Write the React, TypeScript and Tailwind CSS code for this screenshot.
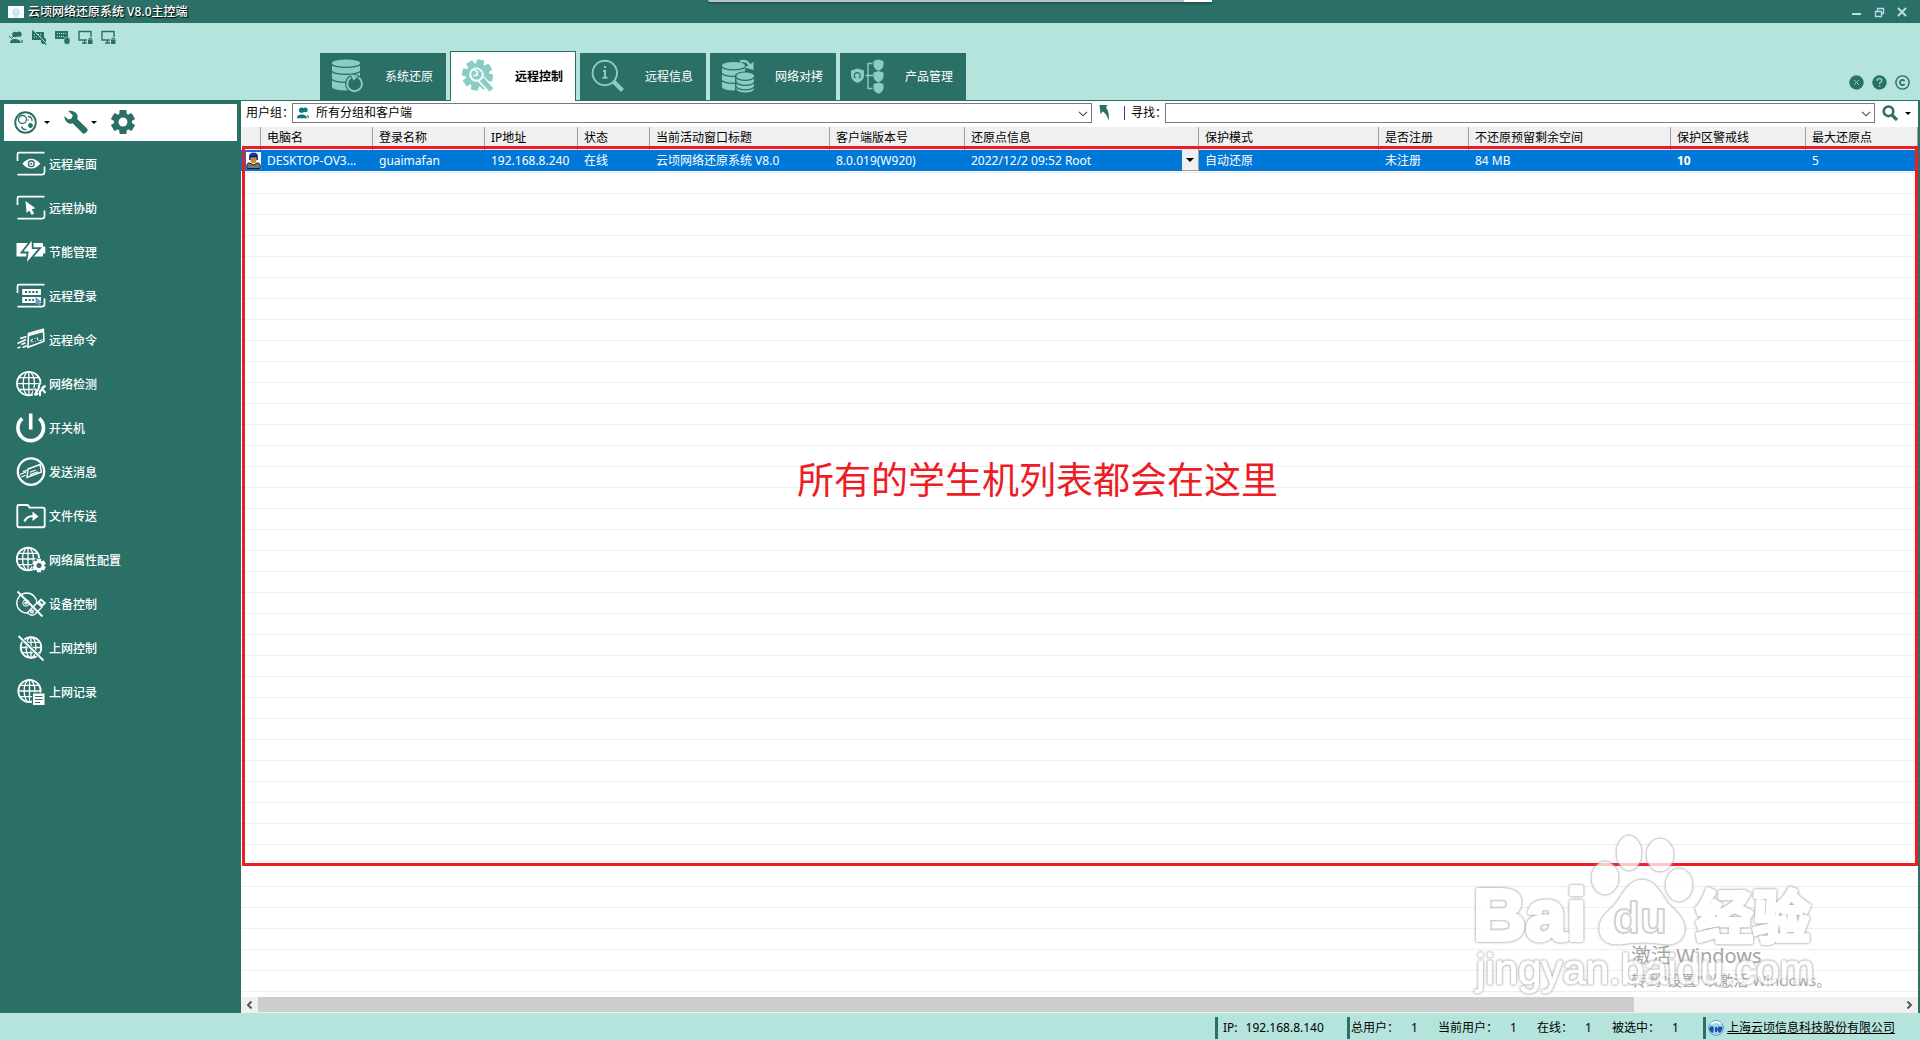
import React from "react";
import type { ReactNode } from "react";

const DARK = "#2a7067";
const MINT = "#89cdc5";

function Globe({ cx, cy, r }: { cx: number; cy: number; r: number }) {
  return (
    <g fill="none" stroke="#fff" strokeWidth="1.3">
      <circle cx={cx} cy={cy} r={r} strokeWidth="1.8" />
      <ellipse cx={cx} cy={cy} rx={r * 0.48} ry={r} />
      <path d={`M${cx} ${cy - r}v${2 * r}M${cx - r} ${cy}h${2 * r}`} />
      <path
        d={`M${cx - r * 0.86} ${cy - r * 0.5}h${r * 1.72}M${cx - r * 0.86} ${cy + r * 0.5}h${r * 1.72}`}
      />
    </g>
  );
}

function Gear({
  cx,
  cy,
  r,
  fill,
  hole,
  angles = [0, 60, 120],
}: {
  cx: number;
  cy: number;
  r: number;
  fill: string;
  hole: string;
  angles?: number[];
}) {
  const tooth = angles.length > 3 ? 0.24 : 0.3;
  return (
    <g fill={fill}>
      {angles.map((angle) => (
        <rect
          key={angle}
          x={cx - r * tooth}
          y={cy - r}
          width={r * tooth * 2}
          height={r * 2}
          rx={r * 0.08}
          transform={`rotate(${angle} ${cx} ${cy})`}
        />
      ))}
      <circle cx={cx} cy={cy} r={r * 0.76} />
      <circle cx={cx} cy={cy} r={r * 0.37} fill={hole} />
    </g>
  );
}

function Frame() {
  return (
    <path
      d="M1.5 12V5q0-1.3 1.5-1.3H28.5M28.5 17.5V23q0 2.7-2.7 2.7H1.5"
      fill="none"
      stroke="#fff"
      strokeWidth="1.7"
    />
  );
}

const menu: { label: string; icon: ReactNode }[] = [
  {
    label: "远程桌面",
    icon: (
      <>
        <Frame />
        <path d="M6.3 14.7Q15.3 5 24.3 14.7Q15.3 24.4 6.3 14.7Z" fill="#fff" />
        <circle cx="15.3" cy="14.7" r="3.6" fill={DARK} />
        <circle cx="15.3" cy="14.7" r="2.2" fill="#fff" />
        <circle cx="15.3" cy="14.7" r="1" fill={DARK} />
      </>
    ),
  },
  {
    label: "远程协助",
    icon: (
      <>
        <Frame />
        <path
          d="M9.5 8L10.6 20 13.2 17.6 15.8 21.9 18.2 20.4 15.6 16.3 19.4 15.2Z"
          fill="#fff"
        />
      </>
    ),
  },
  {
    label: "节能管理",
    icon: (
      <>
        <path d="M.5 6H27v3.5h2.3v7H27v3H.5Z" fill="#fff" />
        <path
          d="M16.5 1.5L5.5 15.5h6.2L9.5 28 24 11.2h-7.3Z"
          fill="#fff"
          stroke={DARK}
          strokeWidth="1.8"
        />
      </>
    ),
  },
  {
    label: "远程登录",
    icon: (
      <>
        <Frame />
        <path d="M6.2 8H25v6H6.2ZM6.2 16H25v6H6.2Z" fill="#fff" />
        <path
          d="M9 11h13M9 19h9"
          stroke={DARK}
          strokeWidth="1.8"
          strokeDasharray="2 1.6"
        />
        <path d="M19.5 16v8l2-1.7 1.7 3 1.7-1-1.6-2.9 2.5-.6Z" fill="#6f9cc8" />
      </>
    ),
  },
  {
    label: "远程命令",
    icon: (
      <g fill="none" stroke="#fff" strokeWidth="1.6">
        <path d="M12.5 8.4L27.3 4.2 28 16.2 12 22.3Z" />
        <path d="M12.5 10.2L27.5 6" strokeWidth="2" />
        <path
          d="M17 14q-2.5.5-2 2.3.4 1.2 2 .4M19 13.2v.8M19.2 16v.8M21 12.2l1.3 3.6M23.5 15.7l3-1"
          strokeWidth="1"
        />
        <path d="M4 13.6L10.5 11.4M1.5 18.5L10 14.6M5.5 19.4l4-1.6M1.5 23l3-1M6.5 22.5L11 20.8" />
      </g>
    ),
  },
  {
    label: "网络检测",
    icon: (
      <>
        <Globe cx={12.8} cy={14.6} r={11.8} />
        <path d="M16.5 30L17.5 20l6.5-7 6 2v15Z" fill={DARK} />
        <path
          d="M19 26.5q.5-4 3.5-6M22.5 20.5q0-4 2-7M24 27v-4.5l5.5-6M18.5 20l2 1M25.5 19.5l3-2.5M22.5 24l-2.5 2M27 21l2.5 3"
          fill="none"
          stroke="#fff"
          strokeWidth="2"
        />
      </>
    ),
  },
  {
    label: "开关机",
    icon: (
      <g fill="none" stroke="#fff" strokeWidth="3.6">
        <path d="M6.2 5.3A12.8 12.8 0 1 0 23.2 5.3" />
        <path d="M14.7 .5V16.5" />
      </g>
    ),
  },
  {
    label: "发送消息",
    icon: (
      <g fill="none" stroke="#fff">
        <circle cx="15" cy="14.6" r="13.2" strokeWidth="2.3" />
        <path d="M12 12L24 7.5 25.5 15 11 20.5Z" strokeWidth="1.4" />
        <path
          d="M14 15.2l6-2.2M14 17.6l8-2.9M4 17.5l6-2.5M5.5 20l4-1.7M7 14.6l4-1.4"
          strokeWidth="1.2"
        />
      </g>
    ),
  },
  {
    label: "文件传送",
    icon: (
      <>
        <path
          d="M1.3 5.5q0-1.5 1.5-1.5H11q1 0 1.6 1l1 1.6H27q1.7 0 1.7 1.7V24.5q0 1.7-1.7 1.7H3q-1.7 0-1.7-1.7Z"
          fill="none"
          stroke="#fff"
          strokeWidth="1.9"
        />
        <path
          d="M8.5 20.5q2-5.5 9-5.5"
          fill="none"
          stroke="#fff"
          strokeWidth="2.2"
        />
        <path d="M16.5 10.5L22.5 15.5 16.5 20Z" fill="#fff" />
      </>
    ),
  },
  {
    label: "网络属性配置",
    icon: (
      <>
        <Globe cx={12} cy={14} r={11.3} />
        <circle cx="23" cy="20.5" r="7.4" fill={DARK} />
        <Gear cx={23} cy={20.5} r={6.8} fill="#fff" hole={DARK} />
      </>
    ),
  },
  {
    label: "设备控制",
    icon: (
      <g fill="none" stroke="#fff" strokeWidth="1.4">
        <circle cx="10.8" cy="14" r="10" />
        <circle cx="10" cy="14" r="3.2" strokeWidth="1" />
        <circle cx="10" cy="14" r="1" />
        <path d="M13 22l8-8 5 4-7 7q-3 2.5-6 0-2-1.5 0-3Z" fill={DARK} />
        <path d="M22.5 13l2.5-2.5 4 3.5-2.5 2.5Z" strokeWidth="1.8" />
        <circle cx="16" cy="22.5" r="1.3" />
        <path d="M1.5 2.5L26.5 27.5" strokeWidth="1.9" />
      </g>
    ),
  },
  {
    label: "上网控制",
    icon: (
      <>
        <Globe cx={15} cy={14.5} r={10.3} />
        <path d="M2.5 3L27.5 27.5" stroke={DARK} strokeWidth="3.4" />
        <path d="M2.5 3L27.5 27.5" stroke="#fff" strokeWidth="1.9" />
      </>
    ),
  },
  {
    label: "上网记录",
    icon: (
      <>
        <Globe cx={13.5} cy={14} r={11.2} />
        <path d="M16.5 16H29v12.5H16.5Z" fill="#fff" stroke={DARK} />
        <path
          d="M19 19.5h7.5M19 22.5h7.5M19 25.5h5"
          stroke={DARK}
          strokeWidth="1.2"
        />
      </>
    ),
  },
];

function Cylinder({
  x,
  y,
  w,
  h,
  bands,
}: {
  x: number;
  y: number;
  w: number;
  h: number;
  bands: number[];
}) {
  const r = w / 2;
  return (
    <g>
      <path
        d={`M${x} ${y}a${r} 3.4 0 0 1 ${w} 0v${h}a${r} 3.4 0 0 1 ${-w} 0Z`}
        fill={MINT}
      />
      {bands.map((b) => (
        <path
          key={b}
          d={`M${x} ${y + b}a${r} 3.4 0 0 0 ${w} 0`}
          fill="none"
          stroke={DARK}
          strokeWidth="1.3"
        />
      ))}
    </g>
  );
}

function Shield({ x, y, s }: { x: number; y: number; s: number }) {
  return (
    <path
      d={`M${x} ${y}l${s * 0.5} ${s * 0.16}v${s * 0.36}q0 ${s * 0.4} ${-s * 0.5} ${s * 0.6}q${-s * 0.5} ${-s * 0.2} ${-s * 0.5} ${-s * 0.6}v${-s * 0.36}Z`}
      fill={MINT}
    />
  );
}

const tabs: { label: string; active?: boolean; icon: ReactNode }[] = [
  {
    label: "系统还原",
    icon: (
      <>
        <Cylinder x={1} y={4} w={28} h={24} bands={[1, 8, 16]} />
        <circle cx="23.5" cy="24.7" r="9.5" fill={DARK} />
        <path
          d="M20 18.3A7.4 7.4 0 1 0 27.5 18.5"
          fill="none"
          stroke={MINT}
          strokeWidth="2"
        />
        <path d="M19.5 15.5l8 1.5-5 4.5Z" fill={MINT} />
      </>
    ),
  },
  {
    label: "远程控制",
    active: true,
    icon: (
      <>
        <Gear
          cx={16.5}
          cy={16}
          r={15.5}
          fill={MINT}
          hole={MINT}
          angles={[12, 57, 102, 147]}
        />
        <path d="M20 20L31.5 32" stroke="#fff" strokeWidth="8" />
        <path d="M19 18.5L30.5 31" stroke={MINT} strokeWidth="5" />
        <path
          d="M12.8 9.8A6.3 6.3 0 1 0 21.5 13.5"
          fill="none"
          stroke="#fff"
          strokeWidth="2"
        />
        <path
          d="M12.8 9.8q5-2 8.7 3.7M13 10.5l3.5 2.3-.5 3.2-3.5.8"
          fill="none"
          stroke="#fff"
          strokeWidth="1.6"
        />
      </>
    ),
  },
  {
    label: "远程信息",
    icon: (
      <>
        <circle
          cx="13.8"
          cy="14"
          r="12.2"
          fill="none"
          stroke={MINT}
          strokeWidth="1.9"
        />
        <path d="M22.5 22.5L31.5 31.5" stroke={MINT} strokeWidth="4.3" />
        <path
          d="M12 12h2v6.5M11.5 18.7h5M13 8h2"
          fill="none"
          stroke={MINT}
          strokeWidth="1.9"
        />
      </>
    ),
  },
  {
    label: "网络对拷",
    icon: (
      <>
        <Cylinder x={1} y={6.5} w={23} h={21.5} bands={[1, 7.5, 14.5]} />
        <path d="M14 16.5a10 4 0 0 1 20 0V35H14Z" fill={DARK} />
        <Cylinder x={15.5} y={17} w={17.5} h={13} bands={[1, 6, 10.5]} />
        <path d="M19 2.5q7-2 9.5 4" fill="none" stroke={MINT} strokeWidth="2.5" />
        <path d="M23.5 8.5l9-5.5V11Z" fill={MINT} />
      </>
    ),
  },
  {
    label: "产品管理",
    icon: (
      <>
        <Shield x={6.5} y={9.5} s={13} />
        <path
          d="M4.5 19a3 3 0 1 1 3.5 0"
          fill="none"
          stroke={DARK}
          strokeWidth="1.2"
        />
        <path
          d="M14.5 16.5h8M21.5 4.5h-4.5v25h4.5"
          fill="none"
          stroke={MINT}
          strokeWidth="1.4"
        />
        <Shield x={27.5} y={0.5} s={10} />
        <Shield x={27.5} y={12} s={10} />
        <Shield x={27.5} y={23.5} s={10} />
      </>
    ),
  },
];

const People = (
  <>
    <circle cx="6" cy="4.5" r="2.8" />
    <circle cx="10" cy="4.2" r="2.6" />
    <path d="M1 13q0-4 5-4t6 4ZM12 9.5q2 .5 2 3h-1.5Z" />
  </>
);

const LockedScreen = (
  <>
    <path
      d="M9 10H1V1.5h12V7M4 13h5M6.5 10v3"
      fill="none"
      stroke={DARK}
      strokeWidth="1.4"
    />
    <path d="M10 9.5h4.5V14H10Z" />
    <path d="M11 9.5V8.3h2.5v1.2" fill="none" stroke={DARK} />
  </>
);

const quickTools: { label: string; icon: ReactNode }[] = [
  {
    label: "分组",
    icon: (
      <>
        {People}
        <path d="M0 6l2.5 2.5L6 4" fill="none" stroke={DARK} />
      </>
    ),
  },
  {
    label: "解锁键鼠",
    icon: (
      <>
        <path d="M0 2h12v8H0Z" />
        <path
          d="M2 4.5h8M2 7h8"
          stroke="#b5e4dc"
          strokeDasharray="1 1"
        />
        <rect x="9" y="7.5" width="5" height="6.5" rx="2.5" />
        <path d="M1 0L15 14" stroke="#b5e4dc" strokeWidth="1" />
        <path d="M0 .5L14 14.5" stroke={DARK} strokeWidth="1.4" />
      </>
    ),
  },
  {
    label: "锁定键鼠",
    icon: (
      <>
        <path d="M0 1h13v8H0Z" />
        <path
          d="M2 3.5h9M2 6.5h7"
          stroke="#b5e4dc"
          strokeWidth="1.2"
          strokeDasharray="1 1"
        />
        <rect
          x="9"
          y="7"
          width="6"
          height="7.5"
          rx="3"
          stroke="#b5e4dc"
          strokeWidth=".6"
        />
      </>
    ),
  },
  { label: "锁定屏幕", icon: LockedScreen },
  { label: "解锁屏幕", icon: LockedScreen },
];

function TitleBar() {
  return (
    <div className="relative flex h-[23px] items-center justify-between bg-[#2a7067] pl-2">
      <div className="absolute top-0 left-1/2 flex h-[2px] w-[504px] -translate-x-1/2 justify-end rounded-b-sm bg-[#b9c4c2] shadow-[0_1px_3px_#123c37]">
        <span className="w-7 bg-white" />
      </div>
      <div className="flex items-center gap-1">
        <svg width="16" height="12" viewBox="0 0 16 12" aria-hidden="true">
          <rect width="16" height="12" fill="#f7fbfd" />
          <path
            d="M5 6q0-3 3-3t3 3ZM4 8h8M6 10h4"
            fill="none"
            stroke="#a5cfe0"
          />
        </svg>
        <h1 className="text-xs leading-4 font-medium text-white [text-shadow:1px_1px_1px_#000]">
          云顷网络还原系统 V8.0主控端
        </h1>
      </div>
      <div className="flex gap-3 pr-[13px] text-[#b9dcef]">
        <button aria-label="最小化">
          <svg width="11" height="12" viewBox="0 0 11 12">
            <path d="M1 8h9" stroke="currentColor" strokeWidth="2" />
          </svg>
        </button>
        <button aria-label="还原窗口">
          <svg width="11" height="12" viewBox="0 0 11 12">
            <path
              d="M1.5 5.5h6v5h-6ZM3.5 5V2.5h6v5H8M3 2.5h7M1 5.5h7"
              fill="none"
              stroke="currentColor"
              strokeWidth="1.3"
            />
          </svg>
        </button>
        <button aria-label="关闭">
          <svg width="10" height="12" viewBox="0 0 10 12">
            <path
              d="M1 2l8 8M9 2l-8 8"
              stroke="currentColor"
              strokeWidth="2"
            />
          </svg>
        </button>
      </div>
    </div>
  );
}

function Header() {
  return (
    <header className="bg-[#b5e4dc]">
      <TitleBar />
      <div className="flex h-7 items-center gap-2 pl-[9px]">
        {quickTools.map((tool) => (
          <button key={tool.label} aria-label={tool.label}>
            <svg width="15" height="15" viewBox="0 0 15 15" fill={DARK}>
              {tool.icon}
            </svg>
          </button>
        ))}
      </div>
      <div className="flex justify-between border-b border-[#2a7067] pr-[10px] pl-80">
        <nav role="tablist" className="flex h-[49px] items-end gap-1">
          {tabs.map((tab) => (
            <button
              key={tab.label}
              role="tab"
              aria-selected={!!tab.active}
              className={
                tab.active
                  ? "-mb-px flex h-[50px] w-[126px] items-center border border-b-0 border-[#2a7067] bg-white pl-[10px] text-xs font-bold text-black"
                  : "flex h-[47px] w-[126px] items-center bg-[#2a7067] pl-[11px] text-xs text-white"
              }
            >
              <svg width="36" height="36" viewBox="0 0 36 36">
                {tab.icon}
              </svg>
              <span className="ml-[18px]">{tab.label}</span>
            </button>
          ))}
        </nav>
        <div className="flex items-end gap-2 pb-[10px]">
          <button aria-label="退出">
            <svg width="15" height="15" viewBox="0 0 15 15">
              <circle cx="7.5" cy="7.5" r="7.2" fill={DARK} />
              <path d="M5 5l5 5M10 5l-5 5" stroke={MINT} />
            </svg>
          </button>
          <button aria-label="帮助">
            <svg width="15" height="15" viewBox="0 0 15 15">
              <circle cx="7.5" cy="7.5" r="7.2" fill={DARK} />
              <path
                d="M5.2 6q0-2.5 2.3-2.5T9.8 5.7q0 1.2-2.2 2.5v1M7.6 10.5v1.5"
                fill="none"
                stroke={MINT}
                strokeWidth="1.5"
              />
            </svg>
          </button>
          <button aria-label="版权">
            <svg
              width="15"
              height="15"
              viewBox="0 0 15 15"
              fill="none"
              stroke={DARK}
            >
              <circle cx="7.5" cy="7.5" r="6.6" strokeWidth="1.4" />
              <path d="M9.6 6A2.6 2.6 0 1 0 9.6 9" strokeWidth="1.7" />
            </svg>
          </button>
        </div>
      </div>
    </header>
  );
}

function Caret() {
  return (
    <svg width="6" height="3" viewBox="0 0 6 3" aria-hidden="true">
      <path d="M0 0h6L3 3Z" fill="#000" />
    </svg>
  );
}

function Sidebar() {
  return (
    <aside className="w-[241px] flex-none bg-[#2a7067] px-1 pt-[3px]">
      <div className="flex h-[37px] items-center bg-white pb-px pl-[10px]">
        <button aria-label="视图" className="flex w-[50px] items-center gap-[7px]">
          <svg width="23" height="23" viewBox="0 0 23 23" fill="none" stroke={DARK}>
            <circle cx="11.5" cy="11.5" r="10.3" strokeWidth="1.9" />
            <circle cx="8.5" cy="8.5" r="4" strokeWidth="1.3" />
            <circle cx="16.5" cy="14.5" r="2" fill={DARK} />
            <path
              d="M14 5.5q4.5.5 4 4.5M7.5 15.5q1 3.5 5 3M14 8.5l.5 1"
              strokeWidth="1.3"
            />
          </svg>
          <Caret />
        </button>
        <button aria-label="工具" className="flex w-[47px] items-center gap-px">
          <svg width="26" height="24" viewBox="0 0 26 24">
            <path
              d="M4 .8l4.8 4.5-1.3 3.2-3.2 1L.3 6q.2 5 3.7 7 2.5 1.3 4.7.3l9.6 9.7q1.7 1.3 3.3 0l1.4-1.4q1.4-1.6 0-3.2L13.2 9q1-2.3-.2-4.8Q10.5 0 4 .8Z"
              fill={DARK}
            />
          </svg>
          <Caret />
        </button>
        <button aria-label="设置">
          <svg width="24" height="24" viewBox="0 0 24 24">
            <Gear cx={12} cy={12} r={12} fill={DARK} hole="#fff" />
          </svg>
        </button>
      </div>
      <nav className="mt-px flex flex-col">
        {menu.map((item) => (
          <button
            key={item.label}
            className="flex h-11 items-center gap-[3px] pl-3 text-xs font-medium text-white"
          >
            <svg width="30" height="30" viewBox="0 0 30 30">
              {item.icon}
            </svg>
            <span className="pt-px">{item.label}</span>
          </button>
        ))}
      </nav>
    </aside>
  );
}

function Chevron() {
  return (
    <svg
      width="10"
      height="6"
      viewBox="0 0 10 6"
      className="pointer-events-none absolute top-2 right-1"
      aria-hidden="true"
    >
      <path d="M1 .8l4 4 4-4" fill="none" stroke="#444" strokeWidth="1.1" />
    </svg>
  );
}

function FilterBar() {
  return (
    <div className="flex h-[26px] items-center bg-white pb-[2px] pl-[5px] text-xs text-black">
      <label htmlFor="group" className="w-[46px] flex-none whitespace-nowrap">
        用户组：
      </label>
      <div className="relative h-5 min-w-0 flex-[800]">
        <svg
          width="14"
          height="14"
          viewBox="0 0 15 15"
          fill="#0b7a78"
          className="pointer-events-none absolute top-[3px] left-1"
        >
          {People}
        </svg>
        <select
          id="group"
          className="block h-5 w-full appearance-none border border-[#7a7a7a] bg-white pl-[23px] text-xs leading-4"
        >
          <option>所有分组和客户端</option>
        </select>
        <Chevron />
      </div>
      <div className="flex w-[73px] flex-none items-center pl-[7px]">
        <button aria-label="返回上级" className="flex-none">
          <svg width="12" height="18" viewBox="0 0 12 18">
            <path
              d="M.5 1h8L7 3.5q4 5 2.5 13.5-1-6-5.5-9.5L1.5 10Z"
              fill={DARK}
            />
          </svg>
        </button>
        <span className="mr-[6px] ml-[13px] h-[14px] w-px flex-none bg-[#3a3f9c]" />
        <label htmlFor="search" className="whitespace-nowrap">
          寻找：
        </label>
      </div>
      <div className="relative h-5 min-w-0 flex-[710]">
        <input
          id="search"
          className="block h-5 w-full border border-[#7a7a7a] bg-white px-1 text-xs"
        />
        <Chevron />
      </div>
      <button
        aria-label="搜索"
        className="flex w-[43px] flex-none items-center gap-[7px] pl-[7px]"
      >
        <svg width="16" height="16" viewBox="0 0 16 16" fill="none" stroke={DARK}>
          <circle cx="6.5" cy="6.3" r="4.8" strokeWidth="2.6" />
          <path d="M10 10l5 5" strokeWidth="3.2" />
        </svg>
        <Caret />
      </button>
    </div>
  );
}

const columns = [
  { title: "电脑名", value: "DESKTOP-OV3...", width: "w-[112px]" },
  { title: "登录名称", value: "guaimafan", width: "w-[112px]" },
  { title: "IP地址", value: "192.168.8.240", width: "w-[93px]" },
  { title: "状态", value: "在线", width: "w-[72px]" },
  { title: "当前活动窗口标题", value: "云顷网络还原系统 V8.0", width: "w-[180px]" },
  { title: "客户端版本号", value: "8.0.019(W920)", width: "w-[135px]" },
  {
    title: "还原点信息",
    value: "2022/12/2 09:52 Root",
    width: "w-[234px]",
    dropdown: true,
  },
  { title: "保护模式", value: "自动还原", width: "w-[180px]" },
  { title: "是否注册", value: "未注册", width: "w-[90px]" },
  { title: "不还原预留剩余空间", value: "84 MB", width: "w-[202px]" },
  { title: "保护区警戒线", value: "10", width: "w-[135px]", bold: true },
  { title: "最大还原点", value: "5", width: "w-auto" },
];

function ClientTable() {
  return (
    <table className="w-full table-fixed border-separate border-spacing-0 text-left text-xs whitespace-nowrap">
      <thead>
        <tr className="h-[23px] bg-[#f0f0f0] text-black">
          <th className="w-5 border-r border-[#a0a0a0] p-0" aria-label="图标" />
          {columns.map((col) => (
            <th
              key={col.title}
              className={`${col.width} border-r border-[#a0a0a0] p-0 pb-[2px] pl-[6px] leading-4 font-normal`}
            >
              {col.title}
            </th>
          ))}
        </tr>
      </thead>
      <tbody>
        <tr className="h-[21px] bg-[#0078d7] text-white">
          <td className="p-0">
            <svg
              width="15"
              height="17"
              viewBox="0 0 15 17"
              className="ml-auto block bg-white"
            >
              <path d="M3 5q0-4.5 4.5-4.5T12 5v3H3Z" fill="#1d32b8" />
              <path d="M4.5 5h6v4q-1 2.5-3 2.5T4.5 9Z" fill="#c98b2b" />
              <path d="M4 4.5h7" stroke="#0a1560" strokeWidth="1.5" />
              <path
                d="M.8 16.5v-3q0-2 2.5-2.7L7.5 13l4.2-2.2q2.5.7 2.5 2.7v3Z"
                fill="#777"
                stroke="#1a1a1a"
              />
            </svg>
          </td>
          {columns.map((col) => (
            <td key={col.title} className="p-0 pl-[6px] leading-4">
              <div className="flex h-[21px] items-center justify-between">
                <span className={col.bold ? "font-bold" : ""}>{col.value}</span>
                {col.dropdown ? (
                  <button
                    aria-label="选择还原点"
                    className="flex h-[21px] w-[17px] items-center justify-center border-r border-b border-[#a0a0a0] bg-[#f0f0f0]"
                  >
                    <svg width="8" height="4" viewBox="0 0 8 4">
                      <path d="M0 0h8L4 4Z" fill="#000" />
                    </svg>
                  </button>
                ) : null}
              </div>
            </td>
          ))}
        </tr>
      </tbody>
    </table>
  );
}

function Watermark() {
  return (
    <svg
      width="370"
      height="180"
      viewBox="0 0 370 180"
      className="pointer-events-none absolute right-[78px] bottom-0"
    >
      <g
        fill="#a4a4a4"
        fontFamily="'Noto Sans', 'Noto Sans CJK SC', sans-serif"
      >
        <text x="161" y="146" fontSize="20">
          激活 Windows
        </text>
        <text x="161" y="169" fontSize="15">
          转到"设置"以激活 Windows。
        </text>
      </g>
      <g
        opacity=".75"
        fill="#fff"
        stroke="#fff"
        strokeLinejoin="round"
        fontFamily="'Liberation Sans', 'Noto Sans CJK SC', sans-serif"
        className="[filter:drop-shadow(0_0_1px_#888)_drop-shadow(0_0_1px_#bbb)]"
      >
        <ellipse cx="135" cy="61" rx="13" ry="16" />
        <ellipse cx="159" cy="36" rx="12" ry="17" />
        <ellipse cx="190" cy="38" rx="13" ry="16" />
        <ellipse cx="209" cy="68" rx="13" ry="16" />
        <path d="M172 63q11 0 20 15 5 9 12 15 12 11 10 22-3 13-18 12-24-4-46 0-18 1-20-12-2-12 10-22 7-6 12-15 9-15 20-15Z" />
        <g strokeWidth="4">
          <text x="3" y="123" fontSize="73" fontWeight="bold">
            Bai
          </text>
          <text x="226" y="121" fontSize="57" fontWeight="bold">
            经验
          </text>
        </g>
        <text
          x="143"
          y="116"
          fontSize="44"
          fontWeight="bold"
          stroke="#c4c4c4"
          strokeWidth="2"
        >
          du
        </text>
        <text x="6" y="167" fontSize="42" strokeWidth="1">
          jingyan.baidu.com
        </text>
      </g>
    </svg>
  );
}

function ScrollBar() {
  return (
    <div className="flex h-4 bg-[#f0f0f0] pb-px">
      <button aria-label="向左滚动" className="flex w-[17px] items-center justify-center">
        <svg width="7" height="8" viewBox="0 0 7 8">
          <path d="M5.5 .5L2 4l3.5 3.5" fill="none" stroke="#555" strokeWidth="2" />
        </svg>
      </button>
      <div className="flex-[1376] bg-[#cdcdcd]" />
      <div className="flex-[267]" />
      <button aria-label="向右滚动" className="flex w-[17px] items-center justify-center">
        <svg width="7" height="8" viewBox="0 0 7 8">
          <path d="M1.5 .5L5 4 1.5 7.5" fill="none" stroke="#555" strokeWidth="2" />
        </svg>
      </button>
    </div>
  );
}

const counts = [
  { label: "总用户：", value: 1, width: "w-[87px]" },
  { label: "当前用户：", value: 1, width: "w-[99px]" },
  { label: "在线：", value: 1, width: "w-[75px]" },
  { label: "被选中：", value: 1, width: "w-[91px]" },
];

function StatusBar() {
  return (
    <footer className="flex h-[27px] items-start justify-end bg-[#b5e4dc] pt-1 text-xs text-black">
      <div className="flex h-[22px] w-[132px] items-center gap-2 border-l-3 border-[#2a7067] pl-[5px]">
        <span>IP:</span>
        <span>192.168.8.140</span>
      </div>
      <div className="flex h-[22px] items-center border-l-3 border-[#2a7067] pl-px">
        {counts.map((item) => (
          <div key={item.label} className={`${item.width} flex gap-3`}>
            <span>{item.label}</span>
            <span>{item.value}</span>
          </div>
        ))}
      </div>
      <div className="flex h-[22px] w-[217px] items-center gap-[3px] border-l-3 border-[#2a7067] pl-[2px]">
        <svg width="16" height="16" viewBox="0 0 16 16" aria-hidden="true">
          <circle cx="8" cy="8" r="7.5" fill="#a9cdf0" stroke="#6f9fd2" />
          <path
            d="M1 9q1-3 3.5-3L6 8.5 5 13Q2 12 1 9ZM10 6.5l4.5.5q0 4-3 6L9 10ZM7 7h2v5H7Z"
            fill="#1458ad"
          />
          <path d="M3 4q5-4 10 0" fill="none" stroke="#f3f8ff" strokeWidth="2" />
        </svg>
        <a href="#" className="underline">
          上海云顷信息科技股份有限公司
        </a>
      </div>
    </footer>
  );
}

export default function App() {
  return (
    <div className="flex min-h-screen flex-col font-['Noto_Sans','Noto_Sans_CJK_SC',sans-serif]">
      <Header />
      <div className="flex flex-1 bg-[#2a7067]">
        <Sidebar />
        <main className="mr-[2px] flex min-w-0 flex-1 flex-col bg-white">
          <FilterBar />
          <section className="relative flex flex-1 flex-col">
            <ClientTable />
            <div className="flex-1 bg-[repeating-linear-gradient(#fff_0px,#fff_1px,#efefef_1px,#efefef_2px,#fff_2px,#fff_21px)]" />
            <div className="pointer-events-none absolute top-[19px] right-0 bottom-[131px] left-px border-3 border-[#ee1c25]">
              <p className="pt-[307px] pl-[552px] text-[37px] leading-[48px] whitespace-nowrap text-[#ee1c25]">
                所有的学生机列表都会在这里
              </p>
            </div>
            <Watermark />
          </section>
          <ScrollBar />
        </main>
      </div>
      <StatusBar />
    </div>
  );
}
